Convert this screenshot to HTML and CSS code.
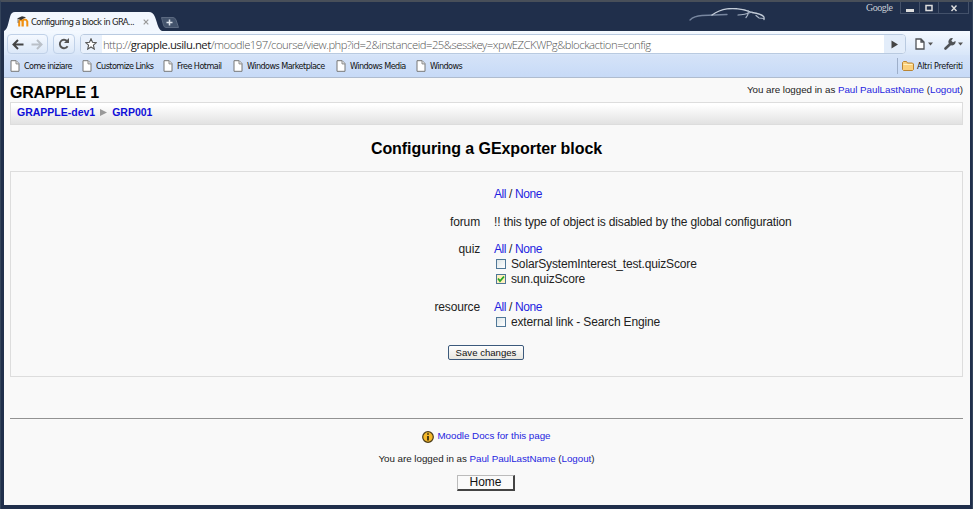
FILE: index.html
```html
<!DOCTYPE html>
<html lang="en">
<head>
<meta charset="utf-8">
<title>Configuring a block in GRAPPLE</title>
<link rel="stylesheet" href="styles.css">
</head>
<body>
<svg class="defs" aria-hidden="true">
  <symbol id="page" viewBox="0 0 10 12"><path d="M1 .7h5.2L9 3.600v7.700H1z" fill="#fff" stroke="#777"/><path d="M6 .9v3h3" fill="#eee" stroke="#888"/></symbol>
</svg>
<div class="window">
  <header class="titlebar">
    <div class="tab">
      <svg class="tab-shape" viewBox="0 0 158 19" preserveAspectRatio="none"><path d="M0 19C4 17 4 11 6 5Q7 0 11 0H145Q149 0 151 5C154 13 154 17 158 19z" fill="#f2f7fe"/></svg>
      <svg class="moodle" viewBox="0 0 12 11"><path d="M2.200 10.500V5.500q0-1.500 1.500-1.500T5.500 5.500v5M5.800 10.500v-5Q6 3.500 7.800 3.500T10.300 5.500v5" fill="none" stroke="#f09010" stroke-width="2"/><path d="M0 2.500 5 .2 9 1.200 4 4z" fill="#333"/><path d="M1 3v4" stroke="#555" stroke-width=".7"/></svg>
      <span class="tab-title">Configuring a block in GRA...</span>
      <svg class="tab-close" viewBox="0 0 6 6"><path d="m.7.7 4.600 4.600m0-4.600L.7 5.300" stroke="#999" stroke-width="1.200"/></svg>
    </div>
    <svg class="newtab" viewBox="0 0 18 11"><path d="M.5.5H12Q14 .5 15 3l2.500 7.500H5Q3 10.500 2.500 8z" fill="#43536c" stroke="#5b6980"/><path d="M8.500 2.500v6m-3-3h6" stroke="#dbe1ea" stroke-width="1.500"/></svg>
    <svg class="car" viewBox="0 0 78 16" fill="none" stroke-linecap="round"><path d="M1 12Q5 8 13 7.500L38 6.500" stroke="#77869f" stroke-width="1.300"/><path d="M23 7Q30 2 38 .8Q52-.5 63 4.500Q73 6 75 9V11.500" stroke="#c3ccd8" stroke-width="1.300"/><path d="M49 7q6 0 14-3M59 2.500q1 4-2 7M67 7.500l3 2.500 5 .5" stroke="#aab6c7" stroke-width="1.200"/></svg>
    <span class="google">Google</span>
    <div class="controls">
      <span><svg viewBox="0 0 8 8"><path d="M0 5h8v3H0z" fill="#ddd"/></svg></span>
      <span><svg viewBox="0 0 8 8"><path d="M1 1.500h6v5H1z" fill="none" stroke="#ddd" stroke-width="1.500"/></svg></span>
      <span class="wide"><svg viewBox="0 0 8 8"><path d="m1.500 1.500 5 5.500m0-5.500L1.500 7" stroke="#ddd" stroke-width="1.400"/></svg></span>
    </div>
  </header>
  <div class="toolbar">
    <div class="navpair">
      <svg viewBox="0 0 12 11"><path d="M6 1 1.500 5.500 6 10M2 5.500h9.500" fill="none" stroke="#444" stroke-width="2"/></svg>
      <svg viewBox="0 0 12 11"><path d="m6 1 4.500 4.500L6 10M10 5.500H.5" fill="none" stroke="#bac0c8" stroke-width="2"/></svg>
    </div>
    <div class="reload"><svg viewBox="0 0 12 12"><path d="M9.600 8.200A4.200 4.200 0 1 1 9 3" fill="none" stroke="#555" stroke-width="1.900"/><path d="M11 0v5H6z" fill="#555"/></svg></div>
    <div class="omnibox">
      <span class="star"><svg viewBox="0 0 12 12"><path d="m6 .8 1.500 3.500 3.800.4-2.900 2.500.9 3.900L6 9l-3.300 2.100.9-3.900L.7 4.700l3.800-.4z" fill="#fff" stroke="#555" stroke-width="1.100"/></svg></span>
      <span class="url">http://<b>grapple.usilu.net</b>/moodle197/course/view.php?id=2&amp;instanceid=25&amp;sesskey=xpwEZCKWPg&amp;blockaction=config</span>
      <span class="go"><svg viewBox="0 0 8 9"><path d="M.5.5 7 4.500.5 8.500z" fill="#444"/></svg></span>
    </div>
    <svg class="menu-page" viewBox="0 0 18 12"><path d="M1 1h5l3 3v7H1zM6 1v3h3" fill="#fff" stroke="#505357" stroke-width="1.300"/><path d="M13 4.500h5L15.500 7.500z" fill="#555"/></svg>
    <svg class="menu-wrench" viewBox="0 0 19 12"><path d="M1.500 10.500 6.500 5.800" stroke="#505357" stroke-width="2.600" stroke-linecap="round"/><path d="M9 .3 7.300 2.700 9 4.200 11.500 3a3.600 3.600 0 0 1-5.400 3.800A3.600 3.600 0 0 1 9 .3z" fill="#505357"/><path d="M14 4.500h5L16.500 7.500z" fill="#555"/></svg>
  </div>
  <nav class="bookmarks">
    <span class="bm b1"><svg><use href="#page"/></svg><span>Come iniziare</span></span>
    <span class="bm b2"><svg><use href="#page"/></svg><span>Customize Links</span></span>
    <span class="bm b3"><svg><use href="#page"/></svg><span>Free Hotmail</span></span>
    <span class="bm b4"><svg><use href="#page"/></svg><span>Windows Marketplace</span></span>
    <span class="bm b5"><svg><use href="#page"/></svg><span>Windows Media</span></span>
    <span class="bm b6"><svg><use href="#page"/></svg><span>Windows</span></span>
    <span class="other"><svg viewBox="0 0 12 10"><path d="M.5 8.500v-7l1-1h3l1 1.500h5l1 1v5.500l-1 1h-9z" fill="#fbd07c" stroke="#b98534"/><path d="M1.500 3.500h9" stroke="#fff0bd"/></svg><span>Altri Preferiti</span></span>
  </nav>
  <main class="page">
    <div class="page-head">
      <h1>GRAPPLE 1</h1>
      <p class="login">You are logged in as <a>Paul PaulLastName</a> (<a>Logout</a>)</p>
    </div>
    <div class="crumbs"><a>GRAPPLE-dev1</a><svg viewBox="0 0 7 7"><path d="M0 0 7 3.500 0 7z" fill="#999"/></svg><a>GRP001</a></div>
    <h2>Configuring a GExporter block</h2>
    <form class="config">
      <div class="row"><span class="label"></span><div><p class="pick"><a>All</a> / <a>None</a></p></div></div>
      <div class="row"><span class="label">forum</span><div><p>!! this type of object is disabled by the global configuration</p></div></div>
      <div class="row"><span class="label">quiz</span><div>
        <p class="pick"><a>All</a> / <a>None</a></p>
        <label><i class="box"></i><span>SolarSystemInterest_test.quizScore</span></label>
        <label><i class="box on"><svg viewBox="0 0 8 8"><path d="M1 3.500 3 6l4-4.500" fill="none" stroke="#25a525" stroke-width="1.800"/></svg></i><span>sun.quizScore</span></label>
      </div></div>
      <div class="row last"><span class="label">resource</span><div>
        <p class="pick"><a>All</a> / <a>None</a></p>
        <label><i class="box"></i><span>external link - Search Engine</span></label>
      </div></div>
      <button type="button" class="save">Save changes</button>
    </form>
    <footer>
      <p class="docs"><svg viewBox="0 0 12 12"><circle cx="6" cy="6" r="5.300" fill="#f5b92a" stroke="#4b3b17" stroke-width="1.200"/><path d="M6 2.300v1.500M6 5v4.500" stroke="#33270c" stroke-width="1.700"/></svg><a>Moodle Docs for this page</a></p>
      <p class="login">You are logged in as <a>Paul PaulLastName</a> (<a>Logout</a>)</p>
      <button type="button" class="home">Home</button>
    </footer>
  </main>
</div>
</body>
</html>
```
FILE: styles.css
```css
* { box-sizing: border-box; }
body { margin: 0; background: #263449; font-family: "Liberation Sans", Arial, sans-serif; color: #222; }
h1, h2, p { margin: 0; }
svg { display: block; flex: none; }
.defs { position: absolute; width: 0; height: 0; }
a { color: #1f1fe0; }
.window { height: 509px; padding: 0 2px 4px 3px; display: flex; flex-direction: column; background: #202f4b; border-top: 2px solid #484f59; border-left: 1px solid #34445b; border-right: 1px solid #34445b; overflow: hidden; white-space: nowrap; }
.titlebar { height: 29px; display: flex; flex: none; align-items: flex-end; }
.tab { width: 158px; height: 19px; display: flex; align-items: center; position: relative; padding-left: 13px; }
.tab-shape { position: absolute; inset: 0; width: 158px; height: 19px; }
.moodle { width: 12px; height: 11px; position: relative; margin-right: 2px; }
.tab-title { position: relative; width: 107px; font: 9.5px "DejaVu Sans Condensed", sans-serif; letter-spacing: -.66px; }
.tab-close { position: relative; width: 6px; height: 6px; margin-left: 5px; }
.newtab { width: 18px; height: 11px; margin: 0 0 3px -1px; }
.car { width: 78px; height: 16px; margin: 0 0 7px 510px; }
.google { font: 10px "Liberation Serif", serif; color: #c7cdd6; margin: 0 0 18px 99px; letter-spacing: -.5px; width: 34px; }
.controls { display: flex; height: 12px; align-self: flex-start; border: 1px solid #43516a; border-top: 0; }
.controls span { width: 19px; display: flex; align-items: center; justify-content: center; border-right: 1px solid #43516a; }
.controls .wide { width: 29px; border: 0; }
.controls svg { width: 8px; height: 8px; }
.toolbar { height: 24px; flex: none; display: flex; align-items: flex-start; padding: 3px 7px 0 3px; background: linear-gradient(#f4f9ff, #d8e6f9); }
.navpair, .reload { height: 20px; border: 1px solid #c0d1e8; border-radius: 4px; display: flex; align-items: center; justify-content: space-around; background: linear-gradient(#f5f9ff, #dce8f8); }
.navpair { width: 41px; }
.navpair svg { width: 12px; height: 11px; }
.reload { width: 22px; margin: 0 5px; }
.reload svg { width: 12px; height: 12px; }
.omnibox { width: 827px; height: 20px; display: flex; border: 1px solid #b9cae0; border-radius: 4px; background: #fff; overflow: hidden; }
.star { width: 21px; background: #e9f1fc; display: flex; align-items: center; justify-content: center; }
.star svg { width: 12px; height: 12px; }
.url { width: 784px; padding-left: 1px; font: 300 11.3px/19px "Open Sans", sans-serif; letter-spacing: -.49px; color: #555; }
.url b { font-weight: 400; color: #222; }
.go { width: 21px; background: #e3edfa; display: flex; align-items: center; justify-content: center; }
.go svg { width: 8px; height: 9px; }
.menu-page { width: 18px; height: 12px; margin: 4px 0 0 9px; }
.menu-wrench { width: 19px; height: 12px; margin: 4px 0 0 11px; }
.bookmarks { height: 23px; flex: none; display: flex; align-items: center; padding-left: 6px; background: linear-gradient(#d5e3f8, #c7daf7); border-bottom: 1px solid #afbccf; font: 9px "DejaVu Sans Condensed", sans-serif; color: #111; letter-spacing: -.56px; }
.bm { display: flex; align-items: center; }
.bm svg { width: 10px; height: 12px; margin-right: 4px; }
.b1 { width: 72px; } .b2 { width: 81px; } .b3 { width: 70px; } .b4 { width: 103px; } .b5 { width: 80px; } .b6 { width: 70px; }
.other { height: 16px; margin-left: auto; width: 73px; display: flex; align-items: center; border-left: 1px solid #9eafca; padding-left: 4px; letter-spacing: -.34px; }
.other svg { width: 12px; height: 10px; margin-right: 3px; }
.page { flex: 1; min-height: 0; background: #f9f9f9; padding: 0 7px 0 6px; }
.page-head { height: 24px; display: flex; justify-content: space-between; padding-top: 4px; }
h1 { font-size: 16px; line-height: 22px; color: #000; letter-spacing: -.2px; }
.login, .docs { font-size: 9.8px; line-height: 16px; letter-spacing: -.03px; }
.crumbs { height: 23px; border: 1px solid #ddd; background: linear-gradient(#fff 10%, #e2e2e2); display: flex; align-items: center; padding: 0 0 3px 6px; font-size: 10.5px; font-weight: bold; }
.crumbs a { color: #1010d8; }
.crumbs svg { width: 7px; height: 7px; margin: 0 5px; }
h2 { font-size: 16px; line-height: 20px; margin: 14px 0 12px; text-align: center; color: #000; letter-spacing: -.06px; }
.config { height: 206px; border: 1px solid #ddd; padding-top: 15px; font-size: 12px; line-height: 15px; letter-spacing: -.15px; }
.row { display: grid; grid-template-columns: 469px 1fr; column-gap: 14px; margin-bottom: 12.7px; }
.label { text-align: right; }
.pick { letter-spacing: -.4px; }
.row label { display: flex; align-items: center; height: 15px; padding-left: 2px; }
.box { width: 10px; height: 10px; margin: -1px 5px 0 0; border: 1px solid #4f7797; background: linear-gradient(135deg, #dce5e8, #fff); }
.box.on { background: #fff0bf; }
.box svg { width: 8px; height: 8px; }
.row.last { margin-bottom: 15px; }
button { display: block; color: #111; padding: 0; font-family: "Liberation Sans", Arial, sans-serif; }
.save { width: 76px; height: 15px; margin-left: 437px; border: 1px solid #3c5a7c; border-radius: 2px; background: linear-gradient(#fff, #e8e7e0); font-size: 9.6px; line-height: 13px; }
footer { margin-top: 41px; border-top: 1px solid #929292; display: flex; flex-direction: column; align-items: center; }
.docs { display: flex; align-items: center; margin-top: 9px; height: 16px; }
.docs svg { width: 12px; height: 12px; margin: 1px 3px 0 0; }
footer .login { margin-top: 7px; }
.home { width: 58px; height: 16px; margin: 8px 1px 0 0; background: #fafafa; border: 1px solid #bbb; border-right: 2px solid #444; border-bottom: 2px solid #444; font-size: 12px; line-height: 13px; }
```
